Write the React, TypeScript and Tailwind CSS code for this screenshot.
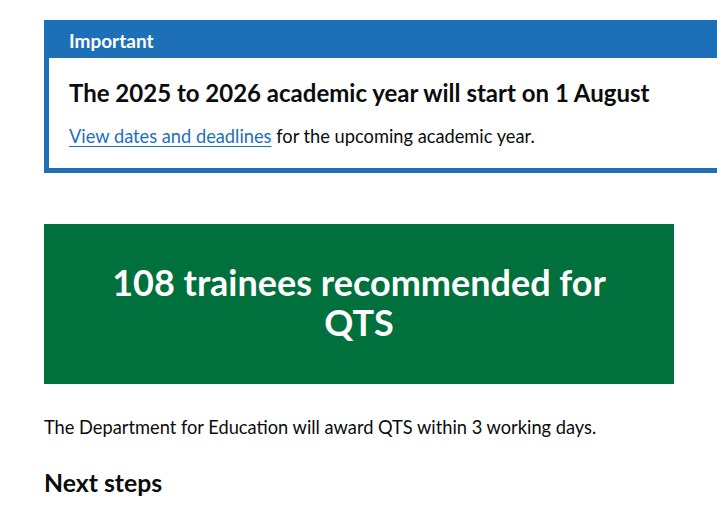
export default function App() {
  return (
    <div className="w-full overflow-hidden bg-white font-['Lato',sans-serif] text-[#0b0c0c]">
      <div className="pl-[44px] pt-[20px] pb-[20px]">
        {/* Notification banner */}
        <div className="w-[720px] border-[5px] border-[#1d70b8] bg-[#1d70b8]">
          <div className="px-[20px] pt-[3px] pb-[5px]">
            <h2 className="text-[19px] leading-[25px] font-bold text-white">Important</h2>
          </div>
          <div className="bg-white p-[20px]">
            <h3 className="text-[24px] leading-[30px] font-bold mb-[16px]">
              The 2025 to 2026 academic year will start on 1 August
            </h3>
            <p className="text-[18.25px] leading-[25px] mb-[-1px]">
              <a href="#" className="text-[#1d70b8] underline decoration-1 underline-offset-[3px]">
                View dates and deadlines
              </a>{' '}
              for the upcoming academic year.
            </p>
          </div>
        </div>

        {/* Confirmation panel */}
        <div className="mt-[51px] w-[630px] bg-[#00703c] px-[40px] pt-[38px] pb-[42px] text-center">
          <h1 className="text-[36px] leading-[40px] font-bold text-white">
            108 trainees recommended for QTS
          </h1>
        </div>

        <p className="mt-[31px] text-[18.25px] leading-[25px]">
          The Department for Education will award QTS within 3 working days.
        </p>

        <h2 className="mt-[28px] text-[24.8px] leading-[30px] font-bold">Next steps</h2>
      </div>
    </div>
  );
}
